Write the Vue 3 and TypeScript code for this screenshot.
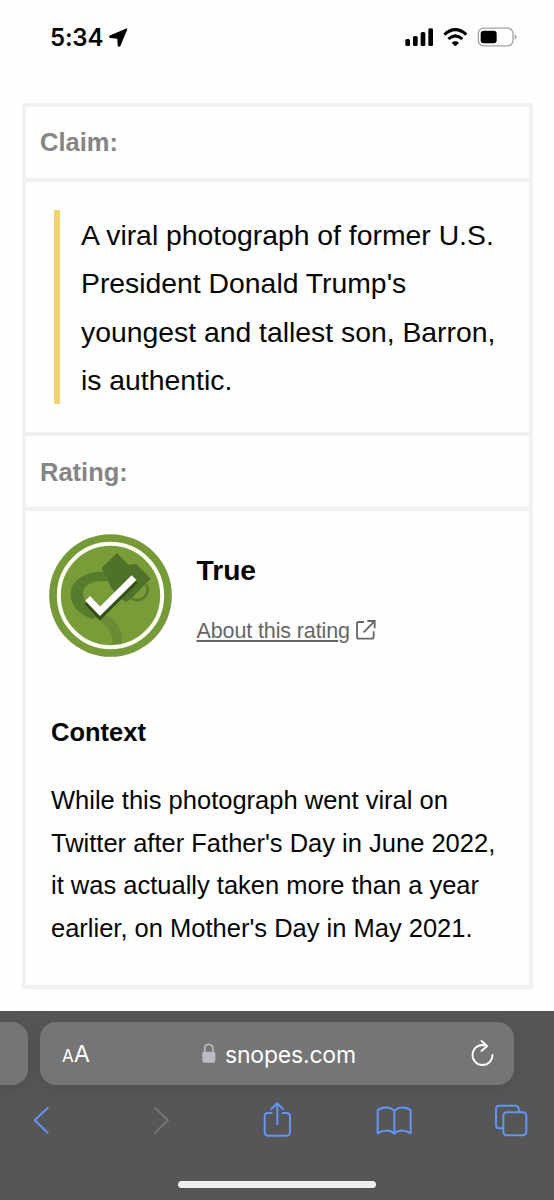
<script setup lang="ts">
const claimLines: string[] = [
  'A viral photograph of former U.S.',
  "President Donald Trump's",
  'youngest and tallest son, Barron,',
  'is authentic.',
]

const contextLines: string[] = [
  'While this photograph went viral on',
  "Twitter after Father's Day in June 2022,",
  'it was actually taken more than a year',
  "earlier, on Mother's Day in May 2021.",
]
</script>

<template>
  <div class="screen">
    <header class="status">
      <span class="time">5:34</span>
      <svg class="location" viewBox="328 83 57 57" aria-hidden="true">
        <path
          d="M381 86 L331 107 Q329 110 333 111 L353 113 Q355 113 355 116 L356 135 Q358 139 361 135 Z"
          fill="#000"
          stroke="#000"
          stroke-width="4"
          stroke-linejoin="round"
        />
      </svg>
      <svg class="indicators" viewBox="75 50 336 60" aria-hidden="true">
        <g fill="#000">
          <rect x="76" y="86" width="14" height="21" rx="4.5" />
          <rect x="99" y="77" width="14" height="30" rx="4.5" />
          <rect x="122" y="65" width="14" height="42" rx="4.5" />
          <rect x="145" y="54" width="14" height="53" rx="4.5" />
          <path d="M215 97 Q226 89 237 97 L228 106 Q226 108 224 106 Z" />
        </g>
        <g fill="none" stroke="#000" stroke-width="9">
          <path d="M193 73 Q226 43 259 73" />
          <path d="M205 86 Q226 67 247 86" />
        </g>
        <rect x="295" y="53.5" width="104" height="53" rx="16" fill="none" stroke="#a3a3a3" stroke-width="4" />
        <rect x="302" y="61" width="48" height="38" rx="9" fill="#000" />
        <path d="M404 72 Q410 75 410 80 Q410 85 404 88 Z" fill="#a3a3a3" />
      </svg>
    </header>

    <main class="card">
      <h2 class="label">Claim:</h2>
      <section class="claim">
        <blockquote>
          <span v-for="line in claimLines" :key="line" class="line">{{ line }}</span>
        </blockquote>
      </section>
      <h2 class="label rating-label">Rating:</h2>
      <section class="rating">
        <div class="verdict">
          <svg class="badge" viewBox="27 26 369 369" aria-hidden="true">
            <circle cx="211.5" cy="210.5" r="184" fill="#759a37" />
            <circle cx="211.5" cy="210.5" r="155" fill="#789c38" />
            <path d="M140 262 C165 280 219 293 219 362 H245 C252 310 228 284 185 262 Z" fill="#688b34" />
            <path d="M204 140 C150 134 92 157 92 207 C92 242 118 268 158 282 L186 258 C155 242 129 229 129 205 C129 176 163 162 206 168 Z" fill="#587c2d" />
            <path d="M184 129 L231 83 L265 118 L289 116 L332 160 L273 220 L257 231 L236 212 L212 186 L202 158 Z" fill="#4f712a" />
            <path d="M319 176 C334 211 300 234 273 219" fill="none" stroke="#587c2d" stroke-width="8" />
            <circle cx="211.5" cy="210.5" r="155" fill="none" stroke="#fbfff1" stroke-width="12" />
            <path d="M141 230 L180 271 L286 166" fill="none" stroke="#345019" stroke-width="20" />
            <path d="M143 219 L180 258 L282 157" fill="none" stroke="#fff" stroke-width="20" />
          </svg>
          <div class="verdict-text">
            <strong>True</strong>
            <div class="about">
              <a>About this rating</a>
              <svg viewBox="528 239 60 60" aria-hidden="true">
                <path d="M552 245 H536 Q531 245 531 250 V289 Q531 295 536 295 H576 Q581 295 581 289 V273 M562 242 H584 V264 M583 243 L551 276" fill="none" stroke="#666" stroke-width="5.5" />
              </svg>
            </div>
          </div>
        </div>
        <h3>Context</h3>
        <p class="context">
          <span v-for="line in contextLines" :key="line" class="line">{{ line }}</span>
        </p>
      </section>
    </main>

    <footer class="browser">
      <div class="tabs">
        <div class="previous-tab"></div>
        <div class="address">
          <span class="text-size"><small>A</small>A</span>
          <span class="host">
            <svg viewBox="605 190 42 59" aria-hidden="true">
              <path d="M613 218 V207 Q613 194 625.5 194 Q638 194 638 207 V218" fill="none" stroke="#bcbbc3" stroke-width="5" />
              <rect x="606" y="216" width="39" height="33" rx="6" fill="#bcbbc3" />
            </svg>
            <span>snopes.com</span>
          </span>
          <svg class="reload" viewBox="584 179 68 78" aria-hidden="true">
            <path d="M648 224 A30 30 0 1 1 618 194 L630 196 M615 182 L632 197 L615 212" fill="none" stroke="#fff" stroke-width="5.5" stroke-linecap="round" stroke-linejoin="round" />
          </svg>
        </div>
      </div>
      <svg class="toolbar" viewBox="0 360 1662 120" aria-hidden="true">
        <g fill="none" stroke="#6394f6" stroke-width="6" stroke-linecap="round" stroke-linejoin="round">
          <path d="M143 384 L104 421 L143 458" />
          <path d="M465 384 L504 421 L465 458" stroke="#757575" />
          <path d="M815 399 H804 Q794 399 794 409 V456 Q794 467 804 467 H859 Q870 467 870 456 V409 Q870 399 859 399 H848 M832 432 V371 M814 387 L832 370 L849 387" />
          <path d="M1183 393 C1170 379 1145 380 1133 391 V460 C1146 450 1170 448 1183 461 C1196 448 1219 450 1232 460 V391 C1220 380 1196 379 1183 393 V459" />
          <path d="M1510 445 H1498 Q1488 445 1488 435 V387 Q1488 377 1498 377 H1546 Q1556 377 1556 388 V394" />
          <rect x="1510" y="397" width="69" height="69" rx="10" />
        </g>
      </svg>
      <div class="home-indicator"></div>
    </footer>
  </div>
</template>

<style>
body {
  margin: 0;
}
</style>

<style scoped>
.screen {
  width: 554px;
  height: 1200px;
  overflow: hidden;
  background: #fefefe;
  font-family: "Liberation Sans", Arial, sans-serif;
  color: #050505;
  display: flex;
  flex-direction: column;
}

.status {
  height: 103px;
  box-sizing: border-box;
  padding: 26px 37px 0 50px;
  display: flex;
  align-items: flex-start;
}

.time {
  font: 600 24px/24px Inter, sans-serif;
  letter-spacing: -0.2px;
  width: 53px;
  white-space: nowrap;
}

.location {
  width: 19px;
  height: 19px;
  margin: 2px 0 0 6px;
}

.indicators {
  width: 112px;
  height: 20px;
  margin: 0.6px 0 0 auto;
}

.card {
  width: 511px;
  height: 886px;
  box-sizing: border-box;
  margin-left: 22px;
  border: 4px solid #f1f1f1;
  background: #fefefe;
}

.label {
  margin: 0;
  height: 75px;
  box-sizing: border-box;
  padding-left: 14px;
  border-bottom: 4px solid #f1f1f1;
  font-size: 25.5px;
  line-height: 70px;
  color: #858585;
}

.rating-label {
  line-height: 72px;
}

.claim {
  height: 254px;
  box-sizing: border-box;
  padding: 28px;
  border-bottom: 4px solid #f1f1f1;
}

blockquote {
  margin: 0;
  height: 194px;
  box-sizing: border-box;
  padding: 1px 0 0 21px;
  border-left: 6px solid #f3d36e;
  font-size: 28.35px;
  line-height: 48.3px;
}

.line {
  display: block;
  white-space: nowrap;
}

.rating {
  padding: 23px 25px 0;
}

.verdict {
  display: flex;
  height: 123px;
}

.badge {
  width: 123px;
  height: 123px;
  margin-left: -2px;
}

.verdict-text {
  margin-left: 24.5px;
}

strong {
  display: block;
  font-size: 28.2px;
  line-height: 34px;
  margin-top: 19px;
}

.about {
  display: flex;
  align-items: center;
  margin-top: 31px;
  color: #666;
  font-size: 21.5px;
  letter-spacing: -0.12px;
  line-height: 27px;
}

.about a {
  text-decoration: underline;
  text-decoration-thickness: 1.5px;
  text-underline-offset: 2px;
  width: 153px;
  white-space: nowrap;
}

.about svg {
  width: 20px;
  height: 20px;
  margin: 0 0 4px 6px;
}

h3 {
  margin: 60px 0 0;
  font-size: 25.5px;
  line-height: 30px;
}

.context {
  margin: 32px 0 0;
  font-size: 25.5px;
  line-height: 42.7px;
}

.browser {
  height: 189px;
  margin-top: 22px;
  background: #565656;
}

.tabs {
  height: 95px;
  box-sizing: border-box;
  padding-top: 11px;
  display: flex;
}

.previous-tab {
  width: 28px;
  height: 63px;
  border-radius: 0 16px 16px 0;
  background: #757575;
  box-shadow: 0 2px 14px #0000001a;
}

.address {
  width: 474px;
  height: 63px;
  box-sizing: border-box;
  margin-left: 12px;
  padding: 0 20px 0 22px;
  border-radius: 16px;
  background: #757575;
  box-shadow: 0 2px 14px #0000001a;
  color: #fff;
  display: flex;
  align-items: center;
  font-family: Inter, sans-serif;
}

.text-size {
  width: 139px;
  padding-top: 3px;
  font-size: 23.5px;
  line-height: 28px;
}

.text-size small {
  font-size: 17px;
}

.host {
  display: flex;
  align-items: center;
  font-size: 23px;
  letter-spacing: -0.2px;
  line-height: 30px;
  padding-top: 2px;
}

.host svg {
  width: 14px;
  height: 20px;
  margin: 0 9px 3px 1px;
}

.reload {
  width: 23px;
  height: 26px;
  margin: 0 0 2px auto;
}

.toolbar {
  display: block;
  width: 554px;
  height: 40px;
  margin-top: -6px;
}

.home-indicator {
  width: 198px;
  height: 7px;
  margin: 41px 0 0 178px;
  border-radius: 4px;
  background: #f0eeef;
}
</style>
